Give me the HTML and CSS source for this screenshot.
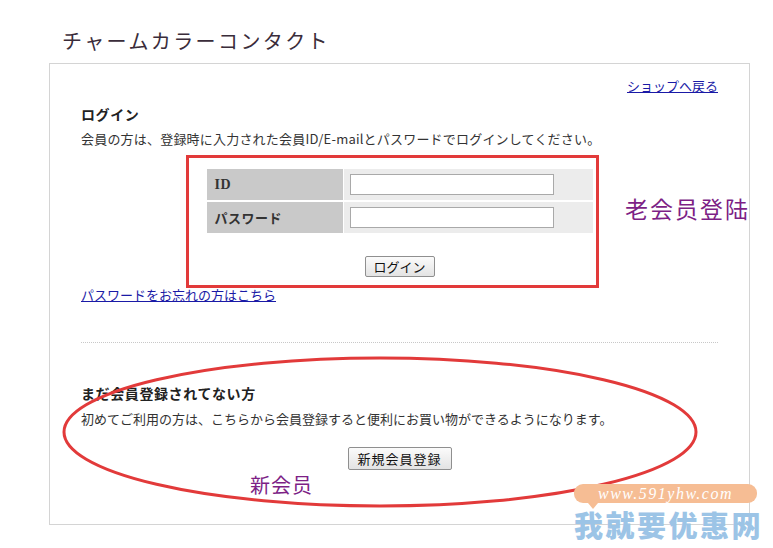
FILE: index.html
```html
<!DOCTYPE html>
<html lang="ja">
<head>
<meta charset="utf-8">
<title>チャームカラーコンタクト</title>
<link rel="stylesheet" href="styles.css">
</head>
<body>
<div class="page">
  <h1 class="site-title">チャームカラーコンタクト</h1>
  <div class="panel">
    <div class="back-row"><a href="#" class="link">ショップへ戻る</a></div>
    <h2 class="section-title">ログイン</h2>
    <p class="desc">会員の方は、登録時に入力された会員ID/E-mailとパスワードでログインしてください。</p>
    <div class="login-table">
      <div class="cell-label label-id">ID</div>
      <div class="cell-value"><input type="text" class="field"></div>
      <div class="cell-label">パスワード</div>
      <div class="cell-value"><input type="password" class="field"></div>
    </div>
    <div class="btn-row"><button class="btn btn-login">ログイン</button></div>
    <div class="forgot-row"><a href="#" class="link">パスワードをお忘れの方はこちら</a></div>
    <hr class="divider">
    <h2 class="section-title section-title-2">まだ会員登録されてない方</h2>
    <p class="desc desc-2">初めてご利用の方は、こちらから会員登録すると便利にお買い物ができるようになります。</p>
    <div class="btn-row btn-row-2"><button class="btn btn-register">新規会員登録</button></div>
  </div>

  <svg class="marks" width="773" height="548" viewBox="0 0 773 548">
    <rect x="187.5" y="156.5" width="410" height="130" fill="none" stroke="#e23a3a" stroke-width="3"/>
    <ellipse cx="380" cy="432" rx="316" ry="74" fill="none" stroke="#e23a3a" stroke-width="3"/>
  </svg>
  <div class="note note-old">老会员登陆</div>
  <div class="note note-new">新会员</div>

  <div class="watermark">
    <div class="wm-bar">www.591yhw.com</div>
    <div class="wm-text">我就要优惠网</div>
  </div>
</div>
</body>
</html>
```
FILE: styles.css
```css
html, body {
  margin: 0;
  padding: 0;
  background: #ffffff;
}
body {
  font-family: "Noto Sans CJK JP", "Liberation Sans", sans-serif;
  color: #333333;
  font-size: 13px;
}
.page {
  position: relative;
  width: 773px;
  height: 548px;
  overflow: hidden;
}
.site-title {
  margin: 0;
  padding: 28px 0 0 62px;
  height: 35px;
  font-size: 20px;
  line-height: 26px;
  font-weight: normal;
  letter-spacing: 2.4px;
  color: #3a2c3a;
}
.panel {
  box-sizing: border-box;
  margin-left: 49px;
  width: 701px;
  height: 462px;
  border: 1px solid #d4d4d4;
  padding: 14px 31px 0 31px;
}
.back-row {
  text-align: right;
  line-height: 16px;
  height: 16px;
}
.link {
  color: #1a1aa6;
  text-decoration: underline;
  font-size: 13px;
}
.section-title {
  margin: 11px 0 0 0;
  font-size: 14px;
  line-height: 18px;
  font-weight: bold;
  color: #222222;
  letter-spacing: 0.6px;
}
.desc {
  margin: 7px 0 0 0;
  line-height: 18px;
  font-size: 13px;
  color: #333333;
  white-space: nowrap;
  letter-spacing: 0.2px;
}
.login-table {
  margin: 21px auto 0 auto;
  width: 386px;
  display: grid;
  grid-template-columns: 136px 1fr;
  column-gap: 1px;
  row-gap: 2px;
}
.cell-label {
  background: #c9c9c9;
  height: 31px;
  line-height: 31px;
  padding-left: 8px;
  font-weight: bold;
  font-size: 13px;
  color: #333333;
  letter-spacing: 0.5px;
}
.label-id {
  font-family: "Liberation Serif", serif;
  font-size: 14px;
}
.cell-value {
  background: #ececec;
  height: 31px;
  display: flex;
  align-items: center;
  padding-left: 6px;
}
.field {
  box-sizing: border-box;
  width: 204px;
  height: 21px;
  border: 1px solid #a9a9a9;
  background: #ffffff;
  margin: 0;
  padding: 0 3px;
}
.btn-row {
  margin-top: 23px;
  display: flex;
  justify-content: center;
}
.btn {
  box-sizing: border-box;
  font-family: "Noto Sans CJK JP", sans-serif;
  font-size: 13px;
  color: #111111;
  border: 1px solid #8f8f8f;
  border-radius: 2px;
  background: linear-gradient(#fbfbfb, #e3e3e3);
  padding: 0;
  margin: 0;
}
.btn-login {
  width: 70px;
  height: 21px;
  line-height: 19px;
}
.forgot-row {
  margin-top: 10px;
  line-height: 16px;
  height: 16px;
}
.divider {
  margin: 39px 0 0 0;
  border: 0;
  border-top: 1px dotted #c8c8c8;
  height: 0;
}
.section-title-2 {
  margin-top: 41px;
}
.desc-2 {
  margin-top: 8px;
  letter-spacing: 0;
}
.btn-row-2 {
  margin-top: 19px;
}
.btn-register {
  width: 104px;
  height: 23px;
  line-height: 21px;
  letter-spacing: 1px;
}
.marks {
  position: absolute;
  left: 0;
  top: 0;
  pointer-events: none;
}
.note {
  position: absolute;
  font-family: "Noto Sans CJK SC", sans-serif;
  color: #7d1f86;
  font-size: 20px;
  line-height: 24px;
  white-space: nowrap;
}
.note-old {
  left: 625px;
  top: 196px;
  letter-spacing: 2px;
  font-size: 23px;
}
.note-new {
  left: 250px;
  top: 473px;
  letter-spacing: 1px;
}
.watermark {
  position: absolute;
  left: 574px;
  top: 484px;
  width: 195px;
}
.wm-bar {
  position: relative;
  width: 183px;
  height: 19px;
  border-radius: 9px;
  background: #f6bd94;
  color: #ffffff;
  font-family: "Liberation Serif", serif;
  font-style: italic;
  font-size: 16px;
  line-height: 19px;
  letter-spacing: 1.5px;
  text-align: center;
}
.wm-bar::after {
  content: "";
  position: absolute;
  left: 14px;
  bottom: -6px;
  border-left: 5px solid transparent;
  border-right: 5px solid transparent;
  border-top: 6px solid #f6bd94;
}
.wm-text {
  margin-top: 4px;
  font-family: "Noto Sans CJK SC", sans-serif;
  font-weight: 900;
  font-size: 29px;
  line-height: 34px;
  letter-spacing: 2.5px;
  color: #9cc4e6;
  white-space: nowrap;
}
```
